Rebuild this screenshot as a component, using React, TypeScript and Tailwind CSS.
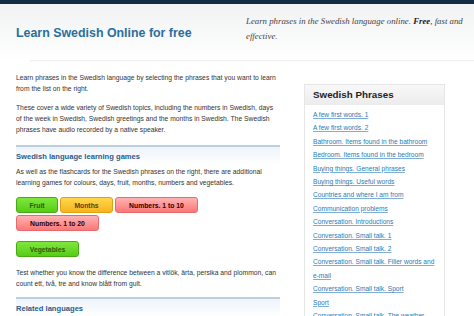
import React from "react";

const links = [
  "A few first words. 1",
  "A few first words. 2",
  "Bathroom. Items found in the bathroom",
  "Bedroom. Items found in the bedroom",
  "Buying things. General phrases",
  "Buying things. Useful words",
  "Countries and where I am from",
  "Communication problems",
  "Conversation. Introductions",
  "Conversation. Small talk. 1",
  "Conversation. Small talk. 2",
  "Conversation. Small talk. Filler words and e\u2011mail",
  "Conversation. Small talk. Sport",
  "Sport",
  "Conversation. Small talk. The weather",
];

function Btn({ label, kind, w }: { label: string; kind: "green" | "yellow" | "red"; w: string }) {
  const cls =
    kind === "green"
      ? "bg-gradient-to-b from-[#7ee83a] to-[#55cc14] border-[#4aa814] text-[#2f5a10] font-semibold"
      : kind === "yellow"
      ? "bg-gradient-to-b from-[#ffd84a] to-[#f6b41c] border-[#e0a010] text-[#5a4208] font-semibold"
      : "bg-gradient-to-b from-[#ffb2b2] to-[#f87878] border-[#e86a6a] text-[#300000] font-bold";
  return (
    <div className={`${w} h-[16px] rounded-[3px] border flex items-center justify-center text-[6.8px] ${cls}`}>
      {label}
    </div>
  );
}

export default function App() {
  return (
    <div className="w-[474px] h-[316px] overflow-hidden bg-white" style={{ fontFamily: "'Liberation Sans', Arial, sans-serif" }}>
      <div className="h-[4px] bg-[#0f2c42]" />
      <div className="h-[56px] bg-gradient-to-b from-[#f1f2f3] to-white flex">
        <div className="w-[230px] pl-[16px] pt-[20px]">
          <div className="text-[12.4px] font-bold text-[#2a6e9e] leading-[18px]">Learn Swedish Online for free</div>
        </div>
        <div className="pl-[16px] pt-[10px] w-[244px]">
          <p className="text-[8.8px] italic leading-[15px] text-[#444]" style={{ fontFamily: "'Liberation Serif', 'Times New Roman', serif" }}>
            Learn phrases in the Swedish language online. <b className="text-[#222]">Free</b>, fast and effective.
          </p>
        </div>
      </div>
      <div className="h-[2px] ml-[30px] bg-gradient-to-b from-[#ececec] to-white" />
      <div className="flex pl-[16px] pt-[10px]">
        <div className="w-[264px] text-[6.75px] leading-[11px] text-[#333]">
          <p>Learn phrases in the Swedish language by selecting the phrases that you want to learn from the list on the right.</p>
          <p className="mt-[8px]">
            These cover a wide variety of Swedish topics, including the numbers in Swedish, days of the week in Swedish, Swedish greetings and the months in Swedish. The Swedish phrases have audio recorded by a native speaker.
          </p>
          <div className="mt-[10px] border-t-2 border-[#bccfe0] bg-gradient-to-b from-[#eef4fa] to-white h-[20px] flex items-center">
            <span className="text-[7.6px] font-bold text-[#2b5c8c]">Swedish language learning games</span>
          </div>
          <p className="mt-[1px]">
            As well as the flashcards for the Swedish phrases on the right, there are additional learning games for colours, days, fruit, months, numbers and vegetables.
          </p>
          <div className="mt-[9px] flex flex-wrap gap-x-[2px] gap-y-[2px] w-[200px]">
            <Btn label="Fruit" kind="green" w="w-[42px]" />
            <Btn label="Months" kind="yellow" w="w-[53px]" />
            <Btn label="Numbers. 1 to 10" kind="red" w="w-[83px]" />
            <Btn label="Numbers. 1 to 20" kind="red" w="w-[83px]" />
          </div>
          <div className="mt-[10px]">
            <Btn label="Vegetables" kind="green" w="w-[63px]" />
          </div>
          <p className="mt-[10px]">
            Test whether you know the difference between a vitlök, ärta, persika and plommon, can count ett, två, tre and know blått from gult.
          </p>
          <div className="mt-[8px] border-t-2 border-[#bccfe0] bg-gradient-to-b from-[#eef4fa] to-white h-[20px] flex items-center">
            <span className="text-[7.6px] font-bold text-[#2b5c8c]">Related languages</span>
          </div>
        </div>
        <div className="ml-[24px] mt-[12px] w-[141px] border border-[#e6e6e6] bg-white self-start">
          <div className="h-[20px] bg-gradient-to-b from-[#f8f8f8] to-[#ececec] flex items-center pl-[8px]">
            <span className="text-[9.8px] font-bold text-[#222]">Swedish Phrases</span>
          </div>
          <ul className="pl-[8px] pr-[1px] pt-[3px] text-[6.6px] leading-[13.4px] text-[#2a7bb4]">
            {links.map((l) => (
              <li key={l}>
                <span className="underline decoration-[#7fb0d4]">{l}</span>
              </li>
            ))}
          </ul>
        </div>
      </div>
    </div>
  );
}
